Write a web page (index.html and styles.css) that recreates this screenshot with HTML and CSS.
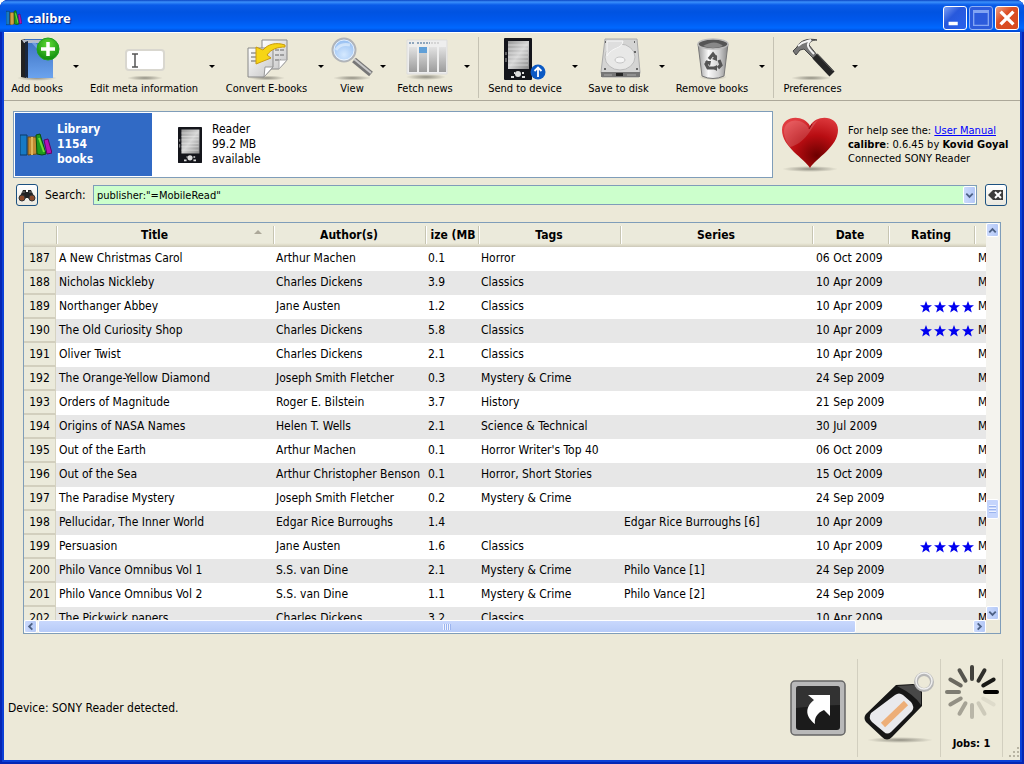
FILE: index.html
```html
<!DOCTYPE html>
<html lang="en">
<head>
<meta charset="utf-8">
<title>calibre</title>
<link rel="stylesheet" href="styles.css">
</head>
<body>
<svg class="defs" aria-hidden="true">
  <defs>
    <linearGradient id="gBlue" x1="0" y1="0" x2="0" y2="1"><stop offset="0" stop-color="#3a6fc0"/><stop offset="1" stop-color="#6ba3ee"/></linearGradient>
    <radialGradient id="gGreen" cx=".5" cy=".3" r=".7"><stop offset="0" stop-color="#5fdc35"/><stop offset="1" stop-color="#0d8a0d"/></radialGradient>
    <linearGradient id="gPaper" x1="0" y1="0" x2="1" y2="1"><stop offset="0" stop-color="#fff"/><stop offset="1" stop-color="#c4c4c4"/></linearGradient>
    <linearGradient id="gMetal" x1="0" y1="0" x2="1" y2="0"><stop offset="0" stop-color="#999"/><stop offset=".35" stop-color="#fafafa"/><stop offset=".7" stop-color="#d0d0d0"/><stop offset="1" stop-color="#888"/></linearGradient>
    <linearGradient id="gScreen" x1="0" y1="0" x2="1" y2="1"><stop offset="0" stop-color="#999"/><stop offset=".5" stop-color="#d4d4d4"/><stop offset="1" stop-color="#888"/></linearGradient>
    <radialGradient id="gLens" cx=".5" cy=".7" r=".7"><stop offset="0" stop-color="#d5e9ff"/><stop offset="1" stop-color="#8fbaf0"/></radialGradient>
    <radialGradient id="gHeart" cx=".62" cy=".75" r=".8"><stop offset="0" stop-color="#6d0000"/><stop offset=".5" stop-color="#b80d12"/><stop offset="1" stop-color="#e03c40"/></radialGradient>
    <linearGradient id="gNews" x1="0" y1="0" x2="0" y2="1"><stop offset="0" stop-color="#e2e2e2"/><stop offset="1" stop-color="#9c9c9c"/></linearGradient>
    <radialGradient id="gShadow"><stop offset="0" stop-color="#55534a" stop-opacity=".6"/><stop offset="1" stop-color="#55534a" stop-opacity="0"/></radialGradient>
    <symbol id="books" viewBox="0 0 32 24">
      <path d="M0 2h7v20H0z" fill="#1679c4" stroke="#0b3a68"/>
      <path d="M8 4h9v17l-9 1z" fill="#c08a32" stroke="#6c4a13"/>
      <path d="M12 4v18" stroke="#e0b55a" stroke-width="2"/>
      <path d="M16 2l4-1 6 20-4 1-5-1z" fill="#1e9a1c" stroke="#094d0c"/>
      <path d="M19 5l5 14" stroke="#6fdb37" stroke-width="2"/>
      <path d="M24 7l4-1 4 14-5 1z" fill="#b512b5" stroke="#5a075c"/>
    </symbol>
    <symbol id="reader" viewBox="0 0 28 42">
      <rect width="28" height="42" rx="1" fill="#14151b"/>
      <path d="M4 3h21v28H4z" fill="url(#gScreen)"/>
      <path d="M4 7h20M4 11h20M4 15h20M4 19h20M4 23h20M4 27h20" stroke="#eee" stroke-opacity=".6"/>
      <circle cx="14" cy="36" r="3" fill="#ddd"/><path d="M7 39h3M18 39h3M10 35h1M18 35h2" stroke="#ddd" stroke-width="2"/>
      <path d="M2 14v3M2 20v4" stroke="#aaa"/>
    </symbol>
    <symbol id="stars" viewBox="0 0 56 12">
      <g fill="#0000f0">
        <path id="star" d="M6 0l1.6 4.3H12L8.500 7l1.300 4.500L6 8.900 2.200 11.500 3.500 7 0 4.300h4.400z"/>
        <use href="#star" x="14"/><use href="#star" x="28"/><use href="#star" x="42"/>
      </g>
    </symbol>
  </defs>
</svg>
<div class="window">
  <header class="titlebar">
    <svg class="app-icon" viewBox="0 0 32 24" preserveAspectRatio="none"><use href="#books"/></svg>
    <h1>calibre</h1>
    <button class="caption" aria-label="Minimize"><svg viewBox="0 0 24 24"><path d="M5 16h10v4H5z" fill="#fff"/></svg></button>
    <button class="caption maximize" aria-label="Maximize"><svg viewBox="0 0 24 24"><path d="M4 4h16v16H4z" fill="none" stroke="#82a4f3" stroke-width="1.500"/><path d="M4 5h16" stroke="#82a4f3" stroke-width="3"/></svg></button>
    <button class="caption close" aria-label="Close"><svg viewBox="0 0 24 24"><path d="M5 5l14 14M19 5L5 19" stroke="#fff" stroke-width="3.600"/></svg></button>
  </header>

  <div class="client">
    <nav class="toolbar" aria-label="Main toolbar">
      <div class="tool"><button class="action">
        <svg viewBox="0 0 48 44"><ellipse cx="24" cy="41" rx="20" ry="3" fill="url(#gShadow)"/><path d="M8 3l5-1v39l-5-1z" fill="#222"/><path d="M12 2h28v39H15l-3-2z" fill="url(#gBlue)"/><path d="M9 3h30v3H11z" fill="#b6bcc9"/><path d="M12 5l3-1v37l-3-1z" fill="#18263d"/><path d="M20 5l12 14" stroke="#91b8f0" stroke-opacity=".6" stroke-width="3"/><circle cx="35" cy="12" r="11" fill="url(#gGreen)" stroke="#20a31f"/><path d="M35 5v14M28 12h14" stroke="#fff" stroke-width="3.500"/></svg>
        <span>Add books</span></button><button class="more" aria-label="Add books menu"></button></div>
      <div class="tool"><button class="action">
        <svg viewBox="0 0 48 44"><ellipse cx="25" cy="41" rx="18" ry="2.500" fill="url(#gShadow)"/><rect x="6" y="13" width="38" height="20" rx="3" fill="#fff" stroke="#d9d7cf" stroke-width="2"/><path d="M12 17h6M12 30h6M15 17v13" stroke="#555" stroke-width="1.500"/></svg>
        <span>Edit meta information</span></button><button class="more" aria-label="Edit meta information menu"></button></div>
      <div class="tool"><button class="action">
        <svg viewBox="0 0 48 44"><ellipse cx="24" cy="41" rx="18" ry="2.500" fill="url(#gShadow)"/><path d="M19 3h25v20l-8 9H19z" fill="url(#gPaper)" stroke="#888"/><path d="M32 8h9M32 13h9M32 18h9M32 23h6" stroke="#666" stroke-dasharray="4 1"/><path d="M36 32v-9h8z" fill="#fff" stroke="#aaa"/><path d="M5 11h25v19l-9 10H5z" fill="url(#gPaper)" stroke="#888"/><path d="M8 16h7M8 20h6M8 24h6" stroke="#666"/><path d="M21 40l1-10h8z" fill="#fff" stroke="#999"/><path d="M42 8C33 5 25 7 20 13l-7-3v17l15-6-4-3c4-6 11-8 18-8z" fill="#f6d516" stroke="#c89a12"/></svg>
        <span>Convert E-books</span></button><button class="more" aria-label="Convert E-books menu"></button></div>
      <div class="tool"><button class="action">
        <svg viewBox="0 0 48 44"><ellipse cx="24" cy="41" rx="19" ry="2.500" fill="url(#gShadow)"/><path d="M26 23l17 14" stroke="#777" stroke-width="6"/><path d="M26 22l17 14" stroke="#c9c9c9" stroke-width="2"/><circle cx="16" cy="13" r="11.500" fill="url(#gLens)" stroke="#b1b4b8" stroke-width="2"/><circle cx="16" cy="13" r="10" fill="none" stroke="#fff" stroke-opacity=".7"/><path d="M8 13q4-7 14-5" fill="none" stroke="#f6fbff" stroke-opacity=".5" stroke-width="3"/></svg>
        <span>View</span></button><button class="more" aria-label="View menu"></button></div>
      <div class="tool"><button class="action">
        <svg viewBox="0 0 48 44"><ellipse cx="25" cy="40" rx="20" ry="3" fill="url(#gShadow)"/><path d="M6 3h40v34H6z" fill="#eee" stroke="#ddd"/><path d="M8 6h6M16 6h13" stroke="#8fa6bd" stroke-width="2" stroke-dasharray="2 1"/><path d="M30 6h8" stroke="#bbb" stroke-dasharray="2 1"/><path d="M8 10h8v25H8zM18 10h8v25h-8zM28 10h8v25h-8zM38 10h7v25h-7z" fill="url(#gNews)"/><path d="M18 10h8v6h-8z" fill="#609fd7"/></svg>
        <span>Fetch news</span></button><button class="more" aria-label="Fetch news menu"></button></div>
      <hr>
      <div class="tool"><button class="action">
        <svg viewBox="0 0 48 44"><use href="#reader" x="3" y="1" width="28" height="42"/><circle cx="37" cy="35" r="7.500" fill="#0a59c4"/><path d="M37 40v-9M33.500 34l3.500-3.500 3.500 3.500" fill="none" stroke="#fff" stroke-width="1.800"/></svg>
        <span>Send to device</span></button><button class="more" aria-label="Send to device menu"></button></div>
      <div class="tool"><button class="action">
        <svg viewBox="0 0 48 44"><path d="M10 2h32l3 33-1 5H7l-1-5z" fill="#d4d4d3" stroke="#aaa"/><path d="M6 35h39v5H6z" fill="#767676"/><path d="M21 36h7v3h-7z" fill="#252525"/><path d="M9 38h8M32 38h9" stroke="#aaa"/><ellipse cx="25" cy="20" rx="15" ry="13" fill="#e8e8e7" stroke="#bbb"/><path d="M12 4h16c-1 9-11 5-16 15z" fill="#dedede" stroke="#f7f7f7"/><ellipse cx="25" cy="23" rx="5" ry="3" fill="#f5f5f5" stroke="#c5c5c5"/><path d="M10 5h1M39 5h1M9 32h2M41 32h2M39 15h2" stroke="#666" stroke-width="2"/></svg>
        <span>Save to disk</span></button><button class="more" aria-label="Save to disk menu"></button></div>
      <div class="tool"><button class="action">
        <svg viewBox="0 0 48 44"><ellipse cx="25" cy="40" rx="14" ry="3" fill="url(#gShadow)"/><path d="M10 7h30l-4 32q-11 5-22 0z" fill="url(#gMetal)" stroke="#777"/><ellipse cx="25" cy="7" rx="15" ry="5" fill="#555" stroke="#bcbcbc" stroke-width="1.500"/><path d="M15 9q12-7 20 0-10 4-20 0" fill="#888"/><g fill="none" stroke="#555" stroke-width="3.200"><path d="M21 22l4-5 3 4M31 23l2 5-3 3M27 31h-7l-2-4 2-3"/></g><path d="M29 18v6l-5-2zM29 28v6l-5-3zM17 24h6l-1 5z" fill="#555"/></svg>
        <span>Remove books</span></button><button class="more" aria-label="Remove books menu"></button></div>
      <hr>
      <div class="tool"><button class="action">
        <svg viewBox="0 0 48 44"><ellipse cx="22" cy="41" rx="20" ry="2.500" fill="url(#gShadow)"/><path d="M4 14l4-4c3-7 12-9 20-7-5 0-8 2-8 5l8 10-4 3-9-9-4 1-4 5z" fill="#777" stroke="#444"/><path d="M9 9c6-5 10-5 13-6-5 4-4 7 3 14" fill="none" stroke="#f4f4f4" stroke-width="2"/><path d="M26 19l17 18" stroke="#262626" stroke-width="7"/><path d="M28 17l16 17" stroke="#555"/></svg>
        <span>Preferences</span></button><button class="more" aria-label="Preferences menu"></button></div>
    </nav>

    <section class="top">
      <div class="locations">
        <button class="location selected"><svg class="books-icon"><use href="#books"/></svg><span>Library<br>1154<br>books</span></button>
        <button class="location"><svg class="reader-icon"><use href="#reader"/></svg><span>Reader<br>99.2 MB<br>available</span></button>
      </div>
      <svg class="heart" viewBox="0 0 58 58"><ellipse cx="29" cy="53" rx="28" ry="3" fill="url(#gShadow)"/><path d="M29 52C23 42 1 31 1 14 1-1 23-2 29 10 35-2 57-1 57 14 57 31 35 42 29 52z" fill="url(#gHeart)"/><path d="M3 17C2 1 23 1 28 13 30 9 33 6 37 4 30 12 25 27 9 31Q4 25 3 17z" fill="#fff" fill-opacity=".15"/><path d="M28 13l3-5" stroke="#8d0b10"/></svg>
      <p class="help">For help see the: <a href="#">User Manual</a><br><b>calibre</b>: 0.6.45 by <b>Kovid Goyal</b><br>Connected SONY Reader</p>
    </section>

    <form class="search">
      <button type="button" class="square" aria-label="Advanced search"><svg viewBox="0 0 20 20"><path d="M6 5h3v2h2V5h3l4 8-4 3-3-3H9l-3 3-4-3z" fill="#222"/><circle cx="5" cy="13" r="3" fill="#8c4a2a" stroke="#333"/><circle cx="15" cy="13" r="3" fill="#8c4a2a" stroke="#333"/><path d="M5 7h3M12 7h3" stroke="#777"/></svg></button>
      <label for="query">Search:</label>
      <div class="combo"><input id="query" type="text" value='publisher:"=MobileRead"'><button type="button" class="xp" aria-label="Search history"><svg viewBox="0 0 12 12"><path d="M2.500 4L6 7.500 9.500 4" /></svg></button></div>
      <button type="button" class="square" aria-label="Clear search"><svg viewBox="0 0 20 20"><path d="M2 10l5-5h10v10H7z" fill="#3b3b3b"/><path d="M9 7l6 6M15 7l-6 6" stroke="#fff" stroke-width="2"/></svg></button>
    </form>

    <main class="library">
      <div class="viewport">
        <table>
          <colgroup><col class="c-num"><col class="c-title"><col class="c-author"><col class="c-size"><col class="c-tags"><col><col class="c-date"><col class="c-rating"><col class="c-pub"></colgroup>
          <thead><tr><td></td><th scope="col" class="sorted">Title</th><th scope="col">Author(s)</th><th scope="col" class="tight"><span>ize (MB</span></th><th scope="col">Tags</th><th scope="col">Series</th><th scope="col">Date</th><th scope="col">Rating</th><th></th></tr></thead>
          <tbody>
            <tr><th scope="row">187</th><td>A New Christmas Carol</td><td>Arthur Machen</td><td>0.1</td><td>Horror</td><td></td><td>06 Oct 2009</td><td></td><td>M</td></tr>
            <tr><th scope="row">188</th><td>Nicholas Nickleby</td><td>Charles Dickens</td><td>3.9</td><td>Classics</td><td></td><td>10 Apr 2009</td><td></td><td>M</td></tr>
            <tr><th scope="row">189</th><td>Northanger Abbey</td><td>Jane Austen</td><td>1.2</td><td>Classics</td><td></td><td>10 Apr 2009</td><td class="rate"><svg role="img" aria-label="4 stars"><use href="#stars"/></svg></td><td>M</td></tr>
            <tr><th scope="row">190</th><td>The Old Curiosity Shop</td><td>Charles Dickens</td><td>5.8</td><td>Classics</td><td></td><td>10 Apr 2009</td><td class="rate"><svg role="img" aria-label="4 stars"><use href="#stars"/></svg></td><td>M</td></tr>
            <tr><th scope="row">191</th><td>Oliver Twist</td><td>Charles Dickens</td><td>2.1</td><td>Classics</td><td></td><td>10 Apr 2009</td><td></td><td>M</td></tr>
            <tr><th scope="row">192</th><td>The Orange-Yellow Diamond</td><td>Joseph Smith Fletcher</td><td>0.3</td><td>Mystery &amp; Crime</td><td></td><td>24 Sep 2009</td><td></td><td>M</td></tr>
            <tr><th scope="row">193</th><td>Orders of Magnitude</td><td>Roger E. Bilstein</td><td>3.7</td><td>History</td><td></td><td>21 Sep 2009</td><td></td><td>M</td></tr>
            <tr><th scope="row">194</th><td>Origins of NASA Names</td><td>Helen T. Wells</td><td>2.1</td><td>Science &amp; Technical</td><td></td><td>30 Jul 2009</td><td></td><td>M</td></tr>
            <tr><th scope="row">195</th><td>Out of the Earth</td><td>Arthur Machen</td><td>0.1</td><td>Horror Writer's Top 40</td><td></td><td>06 Oct 2009</td><td></td><td>M</td></tr>
            <tr><th scope="row">196</th><td>Out of the Sea</td><td>Arthur Christopher Benson</td><td>0.1</td><td>Horror, Short Stories</td><td></td><td>15 Oct 2009</td><td></td><td>M</td></tr>
            <tr><th scope="row">197</th><td>The Paradise Mystery</td><td>Joseph Smith Fletcher</td><td>0.2</td><td>Mystery &amp; Crime</td><td></td><td>24 Sep 2009</td><td></td><td>M</td></tr>
            <tr><th scope="row">198</th><td>Pellucidar, The Inner World</td><td>Edgar Rice Burroughs</td><td>1.4</td><td></td><td>Edgar Rice Burroughs [6]</td><td>10 Apr 2009</td><td></td><td>M</td></tr>
            <tr><th scope="row">199</th><td>Persuasion</td><td>Jane Austen</td><td>1.6</td><td>Classics</td><td></td><td>10 Apr 2009</td><td class="rate"><svg role="img" aria-label="4 stars"><use href="#stars"/></svg></td><td>M</td></tr>
            <tr><th scope="row">200</th><td>Philo Vance Omnibus Vol 1</td><td>S.S. van Dine</td><td>2.1</td><td>Mystery &amp; Crime</td><td>Philo Vance [1]</td><td>24 Sep 2009</td><td></td><td>M</td></tr>
            <tr><th scope="row">201</th><td>Philo Vance Omnibus Vol 2</td><td>S.S. van Dine</td><td>1.1</td><td>Mystery &amp; Crime</td><td>Philo Vance [2]</td><td>24 Sep 2009</td><td></td><td>M</td></tr>
            <tr><th scope="row">202</th><td>The Pickwick papers</td><td>Charles Dickens</td><td>3.2</td><td>Classics</td><td></td><td>10 Apr 2009</td><td></td><td>M</td></tr>
          </tbody>
        </table>
      </div>
      <div class="vscroll">
        <button class="xp" aria-label="Scroll up"><svg viewBox="0 0 12 12"><path d="M2.500 8L6 4.500 9.500 8"/></svg></button>
        <div class="vtrack"><div class="thumb"></div></div>
        <button class="xp" aria-label="Scroll down"><svg viewBox="0 0 12 12"><path d="M2.500 4L6 7.500 9.500 4"/></svg></button>
      </div>
      <div class="hscroll">
        <button class="xp" aria-label="Scroll left"><svg viewBox="0 0 12 12"><path d="M8 2.500L4.500 6 8 9.500"/></svg></button>
        <div class="htrack"><div class="thumb"></div></div>
        <button class="xp" aria-label="Scroll right"><svg viewBox="0 0 12 12"><path d="M4 2.500L7.500 6 4 9.500"/></svg></button>
      </div>
    </main>

    <footer class="status">
      <p>Device: SONY Reader detected.</p>
      <button class="panel cover" aria-label="Cover browser"><svg viewBox="0 0 56 56"><rect x="1" y="1" width="54" height="54" rx="4" fill="#b9b9b9" stroke="#666" stroke-width="1.500"/><rect x="6" y="6" width="44" height="44" rx="3" fill="#1b1b1b"/><path d="M6 28V9q0-3 3-3h38q3 0 3 3v16Q28 25 6 28z" fill="#4a4a4a" fill-opacity=".5"/><path d="M18 15h22v21l-6-6c-7 3-10 8-9 14-9-7-11-16-1-24z" fill="#fff"/></svg></button>
      <button class="panel tags" aria-label="Tag browser"><svg viewBox="0 0 72 74"><ellipse cx="37" cy="69" rx="33" ry="3" fill="url(#gShadow)"/><path d="M3 43L33 14l17-1q8 1 9 8v14L29 66q-5 5-10 0L3 51q-3-4 0-8z" fill="#161616"/><path d="M34 15l16-1q7 1 8 8v12Q52 24 34 15z" fill="#555" fill-opacity=".8"/><path d="M8 42L32 24q4-3 8 0l8 7q4 5 1 9L28 61q-4 3-7 0L9 51q-4-4-1-9z" fill="#e9e9ec"/><path d="M20 54l23-22" stroke="#edae78" stroke-width="6"/><circle cx="61" cy="11" r="8" fill="none" stroke="#b7b7b7" stroke-width="4"/><circle cx="61" cy="10" r="8" fill="none" stroke="#efefef" stroke-width="1.500"/></svg></button>
      <button class="panel jobs"><svg viewBox="-28 -28 56 56"><g stroke-width="4" stroke-linecap="round">
        <path d="M13 0h12" stroke="#000"/><path d="M13 0h12" stroke="#191916" transform="rotate(-30)"/><path d="M13 0h12" stroke="#302f2b" transform="rotate(-60)"/><path d="M13 0h12" stroke="#43423d" transform="rotate(-90)"/><path d="M13 0h12" stroke="#56554e" transform="rotate(-120)"/><path d="M13 0h12" stroke="#6b6960" transform="rotate(-150)"/><path d="M13 0h12" stroke="#7e7c72" transform="rotate(180)"/><path d="M13 0h12" stroke="#939084" transform="rotate(150)"/><path d="M13 0h12" stroke="#a6a396" transform="rotate(120)"/><path d="M13 0h12" stroke="#b9b6a8" transform="rotate(90)"/><path d="M13 0h12" stroke="#cdcaba" transform="rotate(60)"/><path d="M13 0h12" stroke="#dedbcb" transform="rotate(30)"/></g></svg><b>Jobs: 1</b></button>
      <svg class="grip" viewBox="0 0 12 12"><path d="M9 1h2v2H9zM5 5h2v2H5zM9 5h2v2H9zM1 9h2v2H1zM5 9h2v2H5zM9 9h2v2H9z" fill="#b8b4a3"/></svg>
    </footer>
  </div>
</div>
</body>
</html>
```
FILE: styles.css
```css
* { box-sizing: border-box; }
body {
  margin: 0;
  background: #fff;
  color: #000;
  font: 11px/15px "DejaVu Sans Condensed", "Noto Sans", sans-serif;
}
button, input { font: inherit; color: inherit; margin: 0; }
button { padding: 0; border: 0; background: none; display: block; }
svg { display: block; }
p, h1 { margin: 0; }
.defs { position: absolute; width: 0; height: 0; }

.window {
  display: flex;
  flex-direction: column;
  height: 100vh;
  background: #0b3fd6;
  box-shadow: inset 0 0 0 2px #0526b4;
  border-radius: 8px 8px 0 0;
  overflow: hidden;
}

/* Title bar */
.titlebar {
  display: flex;
  align-items: center;
  gap: 2px;
  height: 32px;
  padding: 3px 5px 0 6px;
  background: linear-gradient(#0a45c4 0, #3b90fb 2px, #0a5ce9 5px, #0053e1 12px, #0058ec 20px, #0068ff 28px, #0046d0 32px);
}
.app-icon { width: 16px; height: 16px; }
.titlebar h1 {
  flex: 1;
  padding-left: 3px;
  color: #fff;
  font: bold 13px/20px "Noto Sans", sans-serif;
  text-shadow: 1px 1px 1px #0b1f80;
}
.caption {
  width: 24px;
  height: 24px;
  border: 1px solid #fff;
  border-radius: 3px;
  background: linear-gradient(135deg, #7da0f4, #2758dc 40%, #2a63ec);
}
.maximize { border-color: #8fb0f4; background: #2c5bdc; }
.close { background: linear-gradient(135deg, #f0a183, #dc4e25 40%, #d54a1f); }

.client {
  flex: 1;
  min-height: 0;
  display: flex;
  flex-direction: column;
  margin: 0 4px 4px;
  background: #ece9d8;
  border-top: 1px solid #fff;
}

/* Toolbar */
.toolbar {
  display: grid;
  grid-template-columns: 78px 136px 109px 62px 84px 8px 100px 87px 100px 8px 85px;
  padding: 4px 1px 0;
  height: 68px;
  border-bottom: 1px solid #aca899;
}
.tool { display: flex; }
.action { flex: 1; min-width: 0; display: flex; flex-direction: column; align-items: center; justify-content: flex-start; white-space: nowrap; }
.action svg { width: 48px; height: 44px; }
.action span { line-height: 16px; }
.more { width: 14px; display: flex; justify-content: center; align-items: flex-start; padding-top: 28px; }
.more::before { content: ""; border: 3px solid transparent; border-top-color: #000; border-bottom: 0; }
.toolbar hr { width: 1px; height: 61px; margin: 0 auto; border: 0; background: #c5c2b3; }

/* Locations and help */
.top { display: flex; align-items: center; padding: 10px 9px 0; }
.locations {
  flex: 1;
  display: flex;
  height: 67px;
  padding: 1px;
  background: #fff;
  border: 1px solid #7f9db9;
}
.location { display: flex; align-items: center; text-align: left; width: 137px; gap: 5px; padding-left: 5px; font-size: 12px; }
.location + .location { padding-left: 24px; gap: 8px; }
.selected { background: #316ac5; color: #fff; font-weight: bold; }
.books-icon { width: 32px; height: 24px; overflow: visible; }
.reader-icon { width: 28px; height: 36px; }
.heart { width: 58px; height: 58px; margin-left: 8px; }
.help { width: 163px; margin-left: 9px; line-height: 14px; white-space: nowrap; }
.help a { color: #00f; }

/* Search */
.search { display: flex; align-items: center; padding: 6px 13px 0 12px; }
.square {
  width: 22px;
  height: 22px;
  border: 1px solid #1c5180;
  border-radius: 3px;
  background: linear-gradient(#fff, #eae8de);
}
.search label { width: 55px; padding-left: 7px; font-size: 12px; }
.combo {
  flex: 1;
  display: flex;
  height: 20px;
  margin-right: 8px;
  border: 1px solid #7f9db9;
  background: #cfc;
}
.combo input { flex: 1; min-width: 0; border: 0; padding: 0 3px; background: transparent; outline: 0; }
.xp {
  width: 13px;
  border: 1px solid #fff;
  border-radius: 2px;
  background: linear-gradient(90deg, #cbdafd, #b4c8f6);
  display: flex;
  align-items: center;
  justify-content: center;
  flex: none;
}
.xp svg { width: 11px; height: 11px; flex: none; fill: none; stroke: #4d6185; stroke-width: 2; }

/* Book list */
.library {
  flex: 1;
  min-height: 0;
  display: grid;
  grid-template: minmax(0, 1fr) 13px / minmax(0, 1fr) 14px;
  margin: 16px 19px 0;
  border: 1px solid #7f9db9;
}
.viewport { overflow: hidden; background: #fff; }
table { width: 100%; table-layout: fixed; border-collapse: separate; border-spacing: 0; font-size: 12px; }
.c-num { width: 32px; }
.c-title { width: 217px; }
.c-author { width: 152px; }
.c-size { width: 53px; }
.c-tags { width: 142px; }
.c-date { width: 76px; }
.c-rating { width: 86px; }
.c-pub { width: 12px; }
th, td { height: 24px; padding: 0 0 0 3px; overflow: hidden; white-space: nowrap; text-align: left; }
thead th, thead td {
  position: relative;
  padding: 0;
  background: linear-gradient(#ebeadb 20px, #dfdcc9 22px, #cbc7b8 24px);
  text-align: center;
}
thead th::before {
  content: "";
  position: absolute;
  left: 0;
  top: 3px;
  width: 2px;
  height: 18px;
  background: linear-gradient(90deg, #c7c5b2 1px, #fff 1px);
}
.sorted { padding-right: 20px; }
.sorted::after {
  content: "";
  position: absolute;
  right: 11px;
  top: 7px;
  border: 4px solid transparent;
  border-bottom-color: #aca899;
  border-top: 0;
}
.tight span { display: block; overflow: hidden; margin: 0 1px 0 4px; }
tbody th {
  padding: 0;
  text-align: center;
  font-weight: normal;
  background: #ebeadb;
  border-right: 1px solid #d6d3c2;
  border-bottom: 2px solid #d2cfbe;
}
tbody td { padding-bottom: 1px; }
tbody tr:nth-child(even) td { background: #e7e7e7; }
tbody td:nth-child(6), tbody td:nth-child(7), tbody td:nth-child(9) { padding-left: 4px; }
.rate svg { width: 56px; height: 12px; margin-left: 29px; }

/* Scroll bars */
.vscroll { display: flex; flex-direction: column; background: #f4f3ee; }
.vscroll .xp { height: 14px; }
.vtrack { flex: 1; display: flex; flex-direction: column; justify-content: flex-end; padding: 0 0 87px; }
.vtrack .thumb { height: 20px; width: 13px; border: 1px solid #fff; border-radius: 2px; background: repeating-linear-gradient(#eef3ff 0 1px, #9bb4ef 1px 2px, #c5d5fc 2px 3px) center / 7px 9px no-repeat #c5d5fc; }
.hscroll { display: flex; background: #f4f3ee; }
.htrack { flex: 1; padding-left: 1px; }
.htrack .thumb { width: 87.5%; height: 13px; border: 1px solid #fff; border-radius: 2px; background: repeating-linear-gradient(90deg, #eef3ff 0 1px, #9bb4ef 1px 2px) center / 8px 6px no-repeat, linear-gradient(#c9d8fd, #b7cbf8); }

/* Status bar */
.status { display: flex; align-items: center; height: 126px; padding: 24px 0 2px 4px; }
.status > p { flex: 1; padding-top: 1px; font-size: 12px; }
.panel { height: 98px; border-right: 1px solid #d2cfbf; display: flex; flex-direction: column; align-items: center; justify-content: center; }
.cover { width: 80px; }
.cover svg { width: 56px; height: 56px; }
.tags { width: 83px; }
.tags svg { width: 72px; height: 74px; }
.jobs { width: 62px; justify-content: flex-start; padding-top: 5px; gap: 16px; }
.jobs svg { width: 56px; height: 56px; }
.grip { width: 12px; height: 12px; align-self: flex-end; margin-left: 5px; }
```
